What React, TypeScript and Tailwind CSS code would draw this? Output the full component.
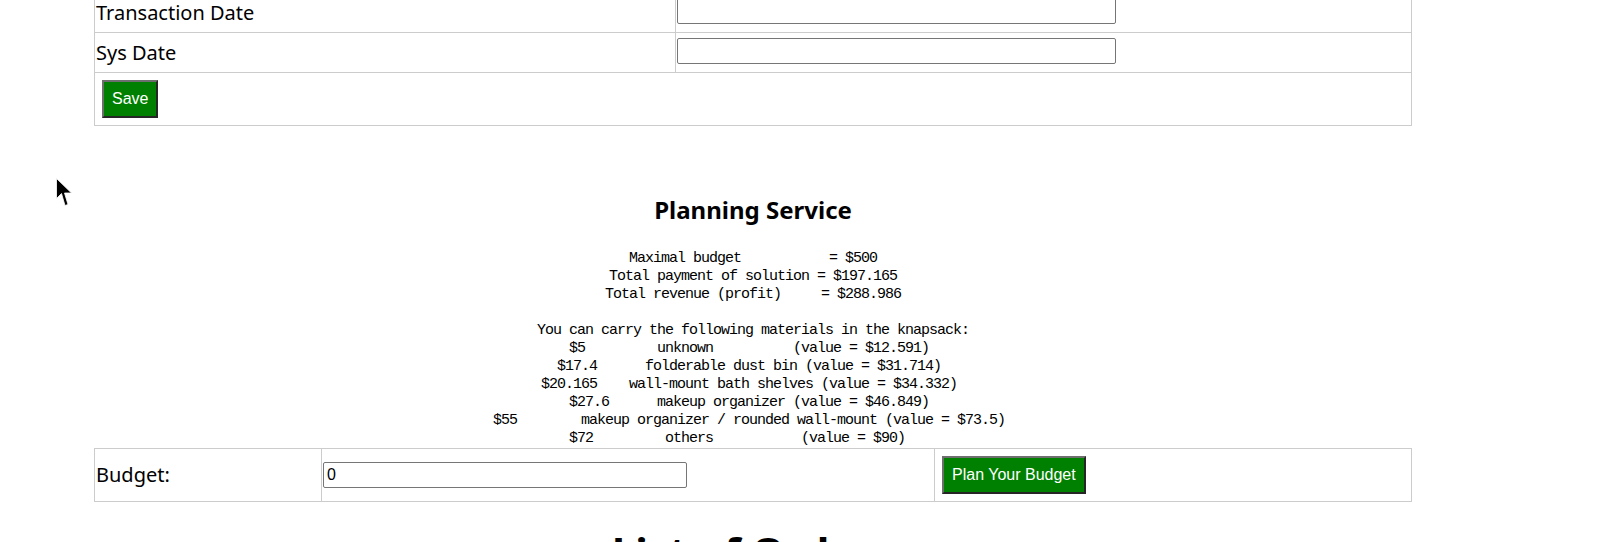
const planText = `Maximal budget           = $500
Total payment of solution = $197.165
Total revenue (profit)     = $288.986

You can carry the following materials in the knapsack:
$5         unknown          (value = $12.591) 
$17.4      folderable dust bin (value = $31.714) 
$20.165    wall-mount bath shelves (value = $34.332) 
$27.6      makeup organizer (value = $46.849) 
$55        makeup organizer / rounded wall-mount (value = $73.5) 
$72         others           (value = $90)    `;

function GreenButton({ label }: { label: string }) {
  return (
    <button
      type="button"
      className="bg-[#008000] text-white font-['Liberation_Sans',Arial,sans-serif] text-[16px] leading-[18px] px-[8px] py-[8px] border-2 border-t-[#6e6e6e] border-l-[#6e6e6e] border-b-[#262626] border-r-[#262626]"
    >
      {label}
    </button>
  );
}

function FormRow({ label }: { label: string }) {
  return (
    <div className="flex border-b border-[#cccccc]">
      <div className="w-[581px] h-[39px] border-r border-[#cccccc] px-px flex items-center">
        {label}
      </div>
      <div className="flex-1 px-px pt-[5px]">
        <input
          type="text"
          className="block w-[439px] h-[26px] border border-[#767676] rounded-[2px] bg-white"
        />
      </div>
    </div>
  );
}

function Cursor() {
  return (
    <svg
      className="absolute left-[56px] top-[178px]"
      width="17"
      height="29"
      viewBox="0 0 17 29"
    >
      <polygon
        points="0.5,0.5 0.5,20.5 5.5,15.5 9,27.5 12,26.5 8.5,15 15.5,15"
        fill="#000"
        stroke="#fff"
        strokeWidth="0.8"
      />
    </svg>
  );
}

export default function App() {
  return (
    <div className="relative h-[542px] overflow-hidden bg-white text-black font-['Noto_Sans',sans-serif]">
      <div className="ml-[94px] w-[1318px] -mt-[8px]">
        <div className="border border-[#cccccc] text-[20px]">
          <FormRow label="Transaction Date" />
          <FormRow label="Sys Date" />
          <div className="p-[7px]">
            <GreenButton label="Save" />
          </div>
        </div>

        <h2 className="mt-[68px] text-center text-[24px] leading-[32px] font-bold">
          Planning Service
        </h2>

        <pre className="mt-[23.5px] text-center whitespace-pre font-['Liberation_Mono',monospace] text-[15px] leading-[18px] tracking-[-1px]">
          {planText}
        </pre>

        <div className="grid grid-cols-[227px_613px_1fr] border border-[#cccccc] text-[20px]">
          <div className="border-r border-[#cccccc] px-px flex items-center">Budget:</div>
          <div className="border-r border-[#cccccc] px-px flex items-center">
            <input
              type="text"
              defaultValue="0"
              className="block w-[364px] h-[26px] border border-[#767676] rounded-[2px] bg-white px-[3px] font-['Liberation_Sans',Arial,sans-serif] text-[16px]"
            />
          </div>
          <div className="p-[7px]">
            <GreenButton label="Plan Your Budget" />
          </div>
        </div>

        <h1 className="mt-[26px] text-center text-[42px] leading-[48px] font-bold">
          List of Orders
        </h1>
      </div>
      <Cursor />
    </div>
  );
}
